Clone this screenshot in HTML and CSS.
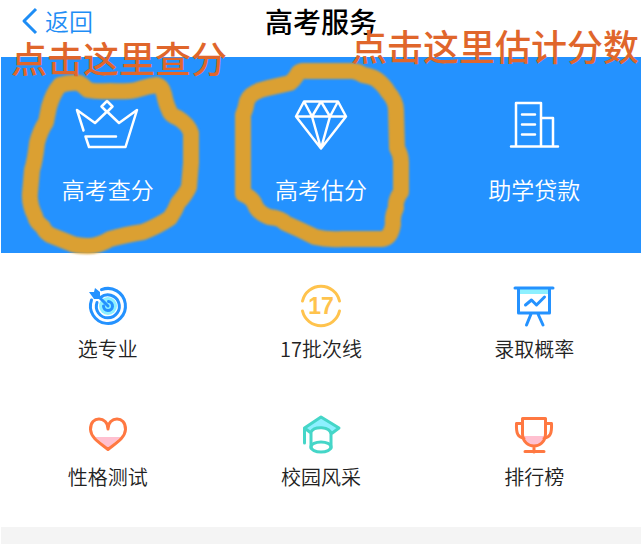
FILE: index.html
```html
<!DOCTYPE html>
<html lang="zh-CN">
<head>
	<meta charset="utf-8">
	<meta name="viewport" content="width=device-width, initial-scale=1">
	<title>高考服务</title>
	<link rel="stylesheet" href="styles.css">
</head>
<body>

	<header class="topbar">
		<a class="back" href="#">
			<svg width="16" height="26" viewBox="0 0 16 26"><path d="M15 1L3 13l12 12"/></svg>
			<span>返回</span>
		</a>
		<h1>高考服务</h1>
	</header>

	<main>
		<nav class="banner">
			<a class="main-item" href="#">
				<svg class="icon" width="64" height="52" viewBox="0 0 64 52">
					<path d="M7.500 31.500L1 11l18 13L31 12.500 43 24l18-13-11.500 37H13L9.500 37.500H40M31 2l5.500 5.500L31 13l-5.500-5.500z"/>
				</svg>
				<span>高考查分</span>
				<svg class="ring" width="200" height="200" viewBox="8 57 200 200">
					<path d="M60 85Q70 82 79 83Q83 85 88 90Q98 92 110 91Q127 92 136 90Q148 86 157 85Q162 86 164 94Q166 104 169 110Q170 115 178 118Q188 124 191 133L191 163L189 187Q186 194 178 203Q175 211 170 218Q158 226 143 232Q124 235 110 239Q99 246 88 246Q76 246 70 243L50 235Q44 231 43 227Q36 222 35 216Q29 204 30 193L32 170Q35 161 37 143Q40 131 46 122L49 107Q53 93 60 85z"/>
				</svg>
			</a>
			<a class="main-item" href="#">
				<svg class="icon" width="64" height="52" viewBox="0 0 64 52">
					<path d="M15 2.500h34L57 17.500 32 49.500 7 17.500zM7 17.500h50M15 2.500l8 15 9-15 9 15 8-15M23 17.500l9 32 9-32"/>
				</svg>
				<span>高考估分</span>
				<svg class="ring" width="200" height="200" viewBox="221 57 200 200">
					<path d="M302 71H353Q359 72 363 75Q371 76 376 79Q384 85 388 92Q396 101 396 110L397 148Q401 155 401 162V192Q395 200 396 208Q392 216 393 224Q391 238 382 239H342Q327 240 315 237Q299 229 285 223Q281 218 269 217Q258 213 255 205Q253 198 243 194V115Q246 108 247 101Q250 92 268 88L290 83Q294 80 297 75Q298 72 302 71z"/>
				</svg>
			</a>
			<a class="main-item" href="#">
				<svg class="icon" width="64" height="52" viewBox="0 0 64 52">
					<path d="M9 47.500h47M14 47V4h25v43M39 19h12v28M20 15.500h13M20 25.500h13M20 35.500h13"/>
				</svg>
				<span>助学贷款</span>
			</a>
			<p class="note note-left">点击这里查分</p>
			<p class="note note-right">点击这里估计分数</p>
		</nav>

		<nav class="grid">
			<a class="item" href="#">
				<svg class="blue" width="40" height="40" viewBox="0 0 40 40">
					<circle class="cyan" cx="20" cy="20" r="9"/>
					<path d="M13.500 3.700A17.500 17.500 0 1 1 3.500 14M12.500 11.500A11.500 11.500 0 1 1 9 16.500M20.500 15.500A4.500 4.500 0 1 1 15.500 20M8 8l12 12"/>
					<path class="fill" d="M1 6h5l1-4 5 4v7H6z"/>
				</svg>
				<span>选专业</span>
			</a>
			<a class="item" href="#">
				<svg class="yellow" width="40" height="40" viewBox="0 0 40 40">
					<path d="M1.500 15A19 19 0 0 1 38.500 15M1.500 25A19 19 0 0 0 38.500 25"/>
					<text x="20" y="28" text-anchor="middle">17</text>
				</svg>
				<span>17批次线</span>
			</a>
			<a class="item" href="#">
				<svg class="blue" width="40" height="40" viewBox="0 0 40 40">
					<path class="cyan" d="M4 3h32v5H4z"/>
					<path d="M1 2h38M4.500 2v25h31V2M11.500 19l6-5 5 5 8-8M17 28l-4.500 11M24 28l5 11"/>
				</svg>
				<span>录取概率</span>
			</a>
			<a class="item" href="#">
				<svg class="orange" width="40" height="40" viewBox="0 0 40 40">
					<path class="pink" d="M7 23h26L20 34z"/>
					<path d="M20 15C20 2 2 1 2.500 15.500 3 24 12 29 20 35.500 28 29 37 24 37.500 15.500 38 1 20 2 20 15z"/>
				</svg>
				<span>性格测试</span>
			</a>
			<a class="item" href="#">
				<svg class="green" width="40" height="40" viewBox="0 0 40 40">
					<path class="cyan" d="M20 2.500L38 14l-7.500 6Q26 10 10 17L3 14z"/>
					<path d="M3.500 29V14L20 3 38 14l-8 6M10 34V18C13 12 29 12 30 20v14M3.500 14l6.500 5"/>
					<ellipse cx="20" cy="33" rx="10" ry="5"/>
				</svg>
				<span>校园风采</span>
			</a>
			<a class="item" href="#">
				<svg class="orange" width="40" height="40" viewBox="0 0 40 40">
					<path class="pink" d="M9 22h23Q30 32 20 32 11 31 9 22z"/>
					<path d="M8.500 4.500h23V20C31 36 9 36 8.500 20zM8 9.500H2.500C2 20 4 23 10 24.500M32 9.500h5.500C38 20 36 23 30 24.500M20 32v6M11 37.500h19"/>
				</svg>
				<span>排行榜</span>
			</a>
		</nav>
	</main>

	<div class="divider"></div>

</body>
</html>
```
FILE: styles.css
```css
*{
	box-sizing: border-box;
	padding: 0;
	margin: 0;
}
body
{
	padding: 0 1px;
	background: #fff;
	font-family: "Noto Sans CJK SC", sans-serif;
	overflow-x: hidden;
}
a
{
	color: inherit;
	text-decoration: none;
}
svg
{
	display: block;
	overflow: visible;
	fill: none;
	stroke: currentColor;
	stroke-linecap: round;
	stroke-linejoin: round;
}
.topbar
{
	display: grid;
	grid-template-columns: 1fr auto 1fr;
	align-items: center;
	height: 57px;
	padding: 0 20px 15px;
}
.topbar h1
{
	font-size: 28px;
	line-height: 42px;
	font-weight: 500;
	color: #000;
}
.back
{
	display: flex;
	align-items: center;
	gap: 8px;
	font-size: 24px;
	line-height: 42px;
	font-weight: 350;
	color: #1e8df5;
}
.back svg
{
	stroke-width: 3;
	stroke-linecap: butt;
}
.banner
{
	position: relative;
	display: grid;
	grid-template-columns: repeat(3, 1fr);
	height: 196px;
	background: #2492ff;
	color: #fff;
}
.main-item
{
	position: relative;
	display: flex;
	flex-direction: column;
	align-items: center;
	gap: 22px;
	padding-top: 42px;
	font-size: 23px;
	line-height: 32px;
	font-weight: 350;
}
.icon
{
	stroke-width: 2.5;
}
/* hand drawn marks over the banner */
.ring
{
	position: absolute;
	top: 0;
	left: 50%;
	transform: translateX(-50%);
	stroke: #dba032;
	stroke-width: 16;
	filter: blur(1px);
}
.note
{
	position: absolute;
	font-size: 36px;
	line-height: 36px;
	font-weight: 500;
	color: #e0662b;
	white-space: nowrap;
}
.note-left
{
	top: -18px;
	left: 10px;
}
.note-right
{
	top: -30px;
	right: 2px;
}
.grid
{
	display: grid;
	grid-template-columns: repeat(3, 1fr);
	row-gap: 50px;
	padding: 33px 0 35px;
}
.item
{
	display: flex;
	flex-direction: column;
	align-items: center;
	gap: 8px;
	font-size: 20px;
	line-height: 30px;
	font-weight: 350;
	color: #222;
}
.item svg
{
	stroke-width: 3;
}
.item .blue
{
	color: #2492ff;
}
.item .yellow
{
	color: #ffc34d;
}
.item .orange
{
	color: #ff7841;
}
.item .green
{
	color: #45d6c8;
}
.item .cyan
{
	fill: #8df0ff;
	stroke: none;
}
.item .pink
{
	fill: #ffc0d0;
	stroke: none;
}
.item .fill
{
	fill: currentColor;
	stroke: none;
}
.item text
{
	font-family: "Liberation Sans", sans-serif;
	font-size: 23px;
	font-weight: 700;
	fill: currentColor;
	stroke: none;
}
.divider
{
	height: 17px;
	background: #f4f4f4;
}
```
